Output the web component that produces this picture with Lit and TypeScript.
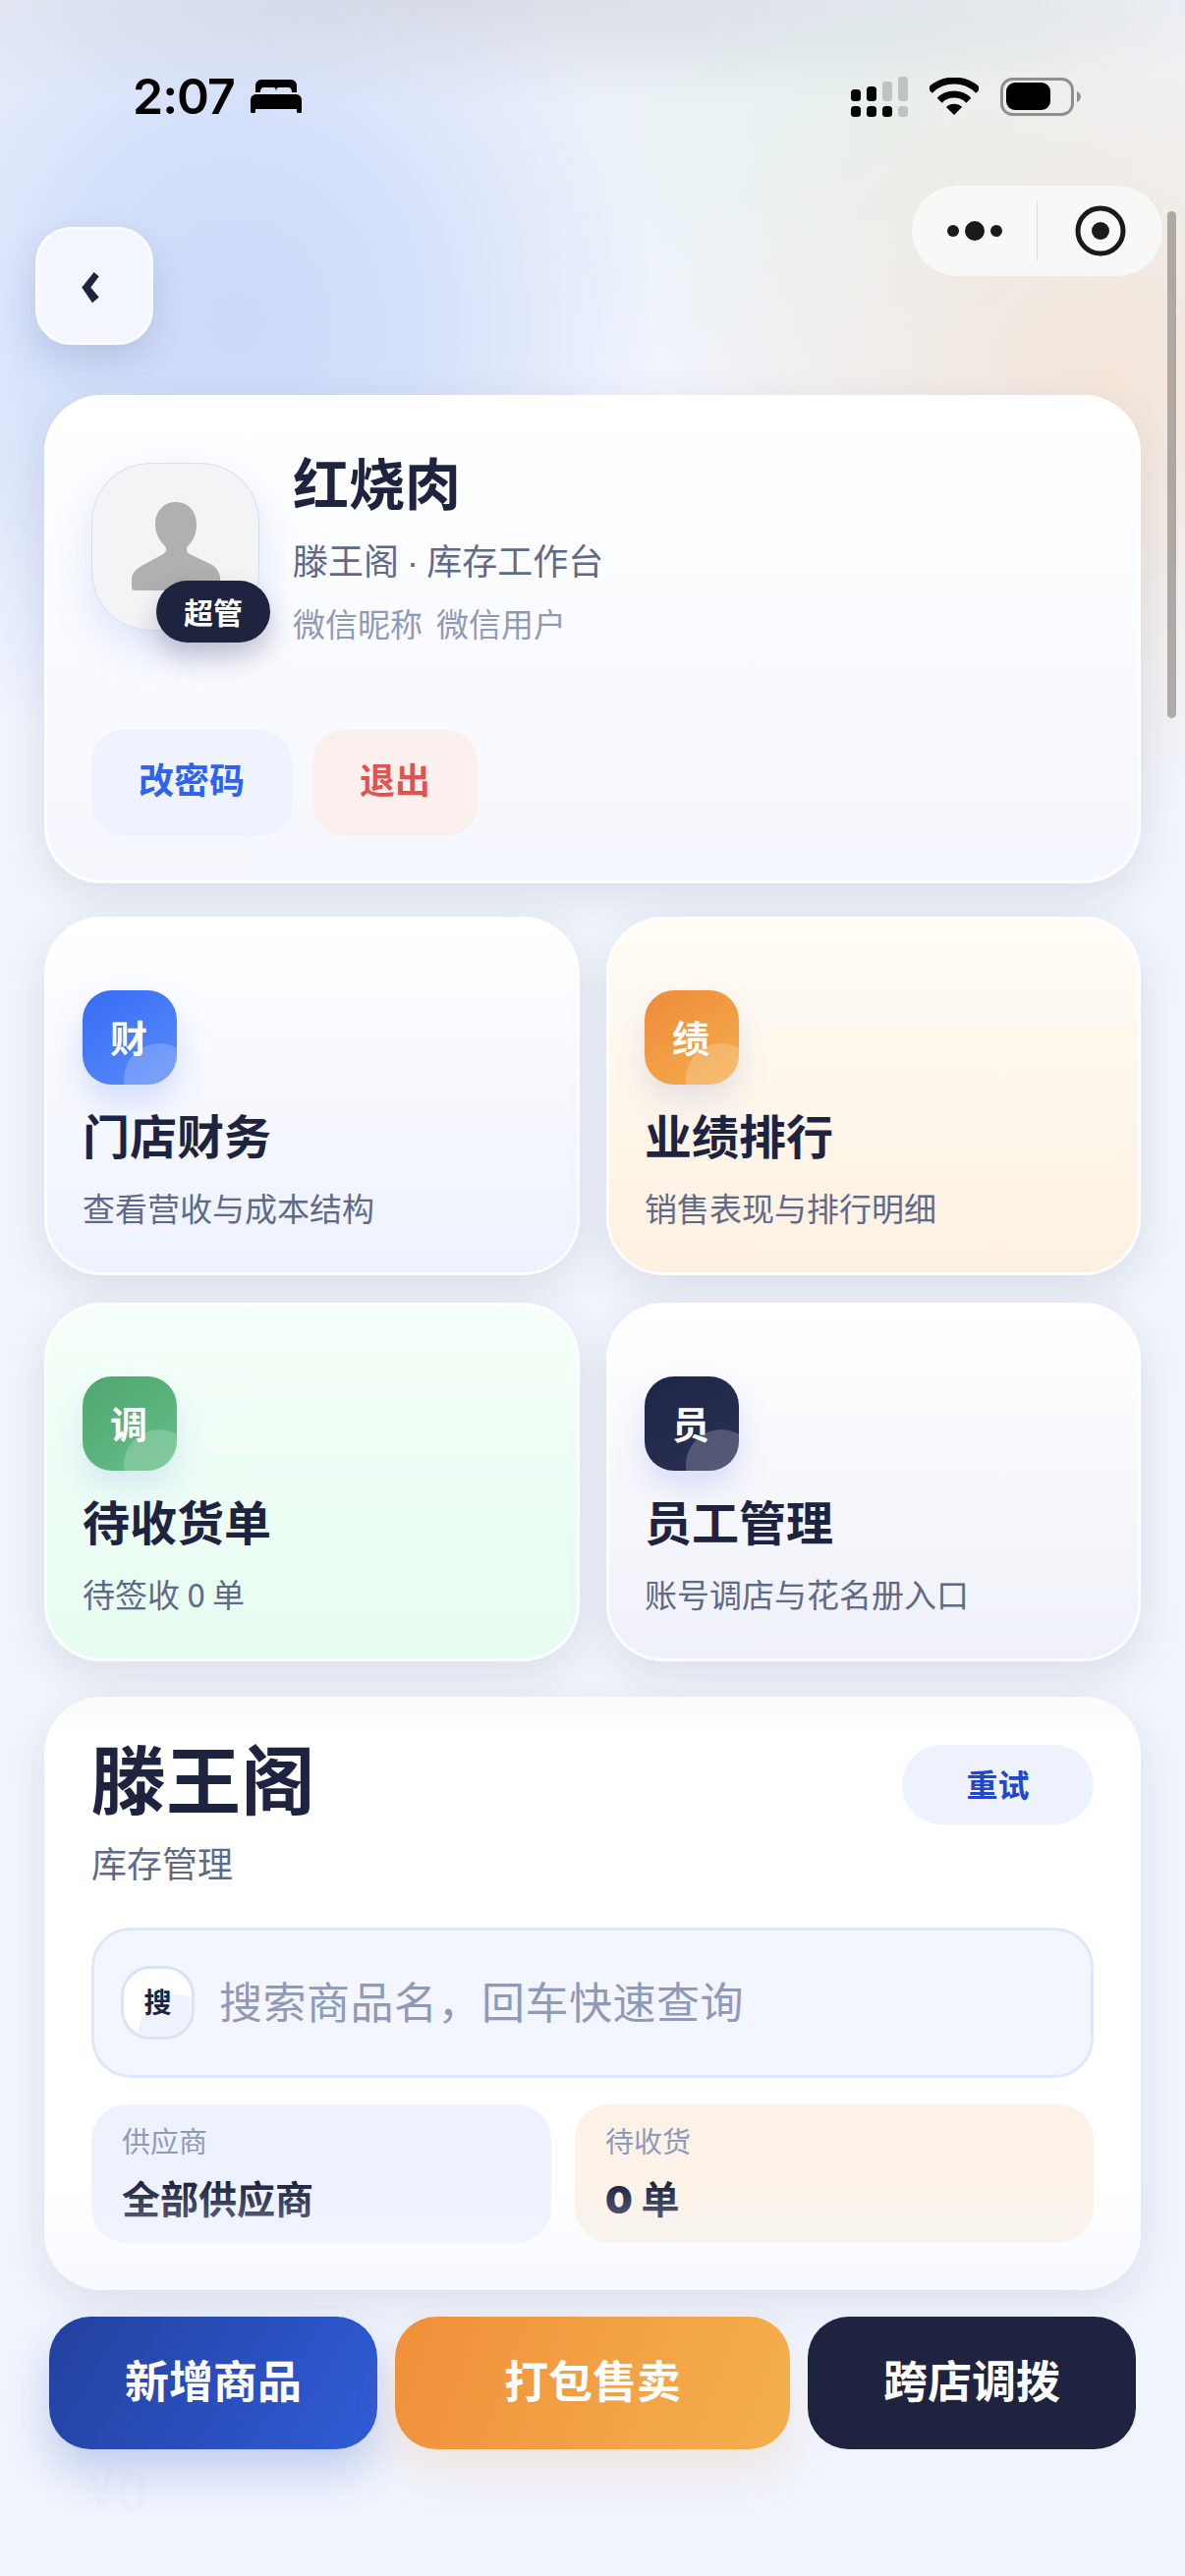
import { LitElement, html, css, svg } from "lit"
import { customElement } from "lit/decorators.js"

const entries = [
    { tone: "blue", mark: "财", title: "门店财务", desc: "查看营收与成本结构" },
    { tone: "orange", mark: "绩", title: "业绩排行", desc: "销售表现与排行明细" },
    { tone: "green", mark: "调", title: "待收货单", desc: "待签收 0 单" },
    { tone: "navy", mark: "员", title: "员工管理", desc: "账号调店与花名册入口" },
]

const signalBars = [
    [0, 13, 12, "#000"], [16, 10, 15, "#000"], [32, 5, 20, "#bcc3c2"], [48, 0, 25, "#bcc3c2"],
    [0, 30, 11, "#000"], [16, 30, 11, "#000"], [32, 30, 11, "#000"], [48, 30, 11, "#bcc3c2"],
] as const

@customElement("app-root")
export class AppRoot extends LitElement {
    static styles = css`
        :host {
            display: block;
            font-family: "Noto Sans CJK SC", "Noto Sans", sans-serif;
            color: #1e2340;
        }
        * { box-sizing: border-box; }

        .page {
            position: relative;
            width: 1206px;
            height: 2622px;
            overflow: hidden;
            display: flex;
            flex-direction: column;
            background:
                radial-gradient(ellipse 900px 110px at 480px 0, rgba(205, 208, 218, 0.65), transparent),
                radial-gradient(ellipse 430px 480px at 240px 330px, #ccdaf9 0%, rgba(204, 218, 249, 0.75) 45%, rgba(204, 218, 249, 0) 100%),
                radial-gradient(ellipse 460px 440px at 1130px 390px, #f4e6da 0%, rgba(244, 230, 218, 0) 100%),
                radial-gradient(ellipse 420px 300px at 900px 130px, #e6f1ee 0%, rgba(230, 241, 238, 0) 100%),
                #f0f4fd;
        }

        .status {
            margin-top: 72px;
            height: 52px;
            padding: 0 106px 0 135px;
            display: flex;
            align-items: center;
            justify-content: space-between;
        }
        .clock { display: flex; align-items: center; gap: 16px; }
        .time {
            font-family: Inter, "Liberation Sans", sans-serif;
            font-size: 50px;
            font-weight: 600;
            letter-spacing: -1px;
            line-height: 52px;
            color: #000;
        }
        .indicators { display: flex; align-items: center; gap: 22px; }
        svg { display: block; }

        .nav {
            margin-top: 64px;
            padding: 0 22px 0 36px;
            display: flex;
            justify-content: space-between;
            align-items: flex-start;
        }
        .back {
            margin-top: 43px;
            width: 120px;
            height: 120px;
            border-radius: 36px;
            border: 3px solid #fbfcff;
            background: #f3f6ff;
            box-shadow: 0 16px 36px rgba(40, 60, 120, 0.16);
            display: flex;
            align-items: center;
            justify-content: center;
        }
        .chevron { margin: 4px 8px 0 0; }
        .capsule {
            width: 257px;
            height: 94px;
            border-radius: 47px;
            background: rgba(249, 249, 247, 0.92);
            border: 1px solid #ecebe8;
            display: flex;
            align-items: center;
        }
        .capsule > div { flex: 1; display: flex; justify-content: center; }
        .capsule .rule { flex: none; width: 1px; height: 60px; background: #dcdcd8; }

        main {
            margin-top: 51px;
            padding: 0 45px;
            display: flex;
            flex-direction: column;
        }

        .profile {
            height: 497px;
            padding: 66px 45px 0;
            border-radius: 58px;
            border: 3px solid rgba(255, 255, 255, 0.9);
            background: linear-gradient(180deg, #ffffff, #f5f7fe) border-box;
            box-shadow: 0 14px 44px rgba(30, 35, 50, 0.1);
        }
        .who { display: flex; gap: 34px; }
        .avatar {
            position: relative;
            flex: none;
            width: 171px;
            height: 171px;
            border-radius: 60px;
            border: 1px solid #d8dcf0;
            background: #f4f4f6;
            box-shadow: 0 16px 44px rgba(80, 120, 240, 0.18);
            display: flex;
            align-items: flex-end;
            justify-content: center;
        }
        .silhouette { margin-bottom: 40px; }
        .badge {
            position: absolute;
            left: 65px;
            top: 119px;
            height: 63px;
            padding: 0 28px;
            border-radius: 32px;
            background: #1e2340;
            color: #fff;
            font-size: 30px;
            font-weight: 700;
            line-height: 62px;
            white-space: nowrap;
            box-shadow: 0 14px 28px rgba(30, 35, 64, 0.24);
        }
        .who-text { margin-top: -10px; }
        .name { font-size: 57px; font-weight: 700; line-height: 57px; }
        .org { margin-top: 33px; font-size: 36px; line-height: 37px; color: #5f6a8a; white-space: nowrap; }
        .org .dot { font-family: "Liberation Sans", sans-serif; }
        .wx { margin-top: 27px; font-size: 33px; line-height: 33px; color: #8f9ab8; display: flex; gap: 14px; }
        .profile-actions { margin-top: 92px; display: flex; gap: 21px; }
        .soft-btn {
            height: 108px;
            padding: 0 48px;
            border-radius: 32px;
            font-size: 36px;
            font-weight: 700;
            line-height: 98px;
        }
        .soft-btn.primary { background: #eff3fe; color: #2f62f1; }
        .soft-btn.danger { background: #fcf0ee; color: #df5450; }

        .grid {
            margin-top: 34px;
            display: grid;
            grid-template-columns: 545px 544px;
            grid-auto-rows: 365px;
            gap: 28px 27px;
        }
        .entry {
            padding: 72px 36px 0;
            border-radius: 58px;
            border: 3px solid rgba(255, 255, 255, 0.85);
            box-shadow: 0 14px 44px rgba(30, 35, 50, 0.1);
        }
        .entry.blue { background: linear-gradient(180deg, #ffffff, #eef2fd) border-box; }
        .entry.orange { background: linear-gradient(180deg, #fffdf7, #fdf0e0) border-box; }
        .entry.green { background: linear-gradient(180deg, #f6fff9, #e6fcf0) border-box; }
        .entry.navy { background: linear-gradient(180deg, #ffffff, #eff1f9) border-box; }
        .mark {
            position: relative;
            overflow: hidden;
            width: 96px;
            height: 96px;
            border-radius: 30px;
            color: #fff;
            font-size: 38px;
            font-weight: 700;
            line-height: 94px;
            text-align: center;
            padding-right: 2px;
        }
        .mark::after {
            content: "";
            position: absolute;
            right: -18px;
            bottom: -30px;
            width: 72px;
            height: 72px;
            border-radius: 50%;
            background: rgba(255, 255, 255, 0.2);
        }
        .blue .mark { background: linear-gradient(145deg, #366cf6, #5a8cf9); box-shadow: 0 16px 32px rgba(60, 110, 240, 0.2); }
        .orange .mark { background: linear-gradient(145deg, #ee8b3c, #f4ae4b); box-shadow: 0 16px 32px rgba(60, 80, 160, 0.13); }
        .green .mark { background: linear-gradient(145deg, #4fa56f, #65c088); box-shadow: 0 16px 32px rgba(70, 130, 230, 0.16); }
        .navy .mark { background: linear-gradient(145deg, #1f2547, #2b3154); box-shadow: 0 16px 32px rgba(70, 100, 230, 0.18); }
        .entry h3 { margin: 26px 0 0; font-size: 48px; font-weight: 700; line-height: 48px; }
        .entry p { margin: 35px 0 0; font-size: 33px; line-height: 33px; color: #5f6a8a; }

        .stock {
            position: relative;
            overflow: hidden;
            margin-top: 36px;
            height: 604px;
            padding: 43px 48px 0;
            border-radius: 58px;
            background: linear-gradient(180deg, #fafafa, #ffffff 36px);
            box-shadow: 0 14px 44px rgba(30, 35, 50, 0.09);
        }
        .stock::after {
            content: "";
            position: absolute;
            left: 0;
            right: 0;
            bottom: 0;
            height: 110px;
            background: linear-gradient(180deg, rgba(244, 247, 255, 0), rgba(244, 247, 255, 0.75));
        }
        .stock-head { display: flex; justify-content: space-between; align-items: flex-start; }
        .stock-head h1 { margin: 0; font-size: 76px; font-weight: 700; line-height: 76px; }
        .stock-head p { margin: 31px 0 0; font-size: 36px; line-height: 36px; color: #5f6a8a; }
        .retry {
            margin-top: 6px;
            width: 195px;
            height: 81px;
            border-radius: 41px;
            background: #eef2fd;
            color: #2347c9;
            font-size: 32px;
            font-weight: 700;
            line-height: 78px;
            text-align: center;
        }
        .search {
            margin-top: 49px;
            height: 153px;
            padding-left: 27px;
            border: 3px solid #dfe7fb;
            border-radius: 40px;
            background: #f3f6ff;
            display: flex;
            align-items: center;
            gap: 25px;
        }
        .search-mark {
            position: relative;
            overflow: hidden;
            flex: none;
            width: 75px;
            height: 75px;
            border: 3px solid #dbe2f3;
            border-radius: 30px;
            background: #fff;
            font-size: 28px;
            font-weight: 700;
            line-height: 66px;
            text-align: center;
        }
        .search-mark::before {
            content: "";
            position: absolute;
            left: 15px;
            top: 26px;
            width: 80px;
            height: 80px;
            border-radius: 50%;
            background: #eef2fd;
        }
        .search-mark span { position: relative; }
        .placeholder { margin-bottom: 5px; font-size: 44px; letter-spacing: 0.5px; line-height: 44px; color: #8f9ab8; }
        .tiles { margin-top: 27px; display: flex; gap: 24px; }
        .tile { height: 141px; padding: 22px 31px 0; border-radius: 36px; }
        .tile.supplier { width: 468px; background: #eef2fd; }
        .tile.pending { flex: 1; background: #fcf2e7; }
        .tile label { display: block; font-size: 29px; line-height: 29px; color: #8f9ab8; }
        .tile strong { display: block; margin-top: 24px; font-size: 39px; font-weight: 700; line-height: 39px; color: #1e2340; }
        .tile .zero { font-family: Inter, "Noto Sans", sans-serif; font-weight: 900; }

        .actions {
            position: relative;
            margin: 27px 5px 0;
            display: flex;
            gap: 18px;
        }
        .action {
            height: 135px;
            border-radius: 42px;
            color: #fff;
            font-size: 45px;
            font-weight: 700;
            line-height: 127px;
            text-align: center;
        }
        .action.add { width: 334px; background: linear-gradient(120deg, #23409f, #2f5cd6); box-shadow: 0 24px 44px rgba(36, 71, 184, 0.22); }
        .action.pack { width: 402px; background: linear-gradient(110deg, #f0903b, #f4b04d); box-shadow: 0 24px 44px rgba(240, 145, 60, 0.14); }
        .action.move { width: 334px; background: #1e2340; }

        /* list rows still scrolling underneath the action bar */
        .ghost {
            position: absolute;
            left: 87px;
            top: 2505px;
            display: flex;
            align-items: flex-end;
            gap: 38px;
            color: rgba(30, 35, 64, 0.016);
        }
        .ghost b { font-size: 54px; font-weight: 700; line-height: 54px; }
        .ghost span { font-size: 28px; line-height: 44px; }

        .scrollbar {
            position: absolute;
            left: 1188px;
            top: 215px;
            width: 9px;
            height: 516px;
            border-radius: 5px;
            background: rgba(120, 114, 110, 0.55);
        }
    `

    private renderStatusIcons() {
        return html`
            <svg width="58" height="41" viewBox="0 0 58 41">
                ${signalBars.map(([x, y, h, fill]) => svg`<rect x=${x} y=${y} width="10" height=${h} rx="3.5" fill=${fill}></rect>`)}
            </svg>
            <svg width="50" height="38" viewBox="0 0 50 38">
                <g fill="none" stroke="#000" stroke-width="7">
                    <path d="M.3 13.3a35 35 0 0 1 49.4 0"></path>
                    <path d="M10.2 23.2a21 21 0 0 1 29.6 0"></path>
                </g>
                <path d="M25 38l-8-8a11.3 11.3 0 0 1 16 0z"></path>
            </svg>
            <svg width="82" height="39" viewBox="0 0 82 39">
                <rect x="1.5" y="1.5" width="72" height="36" rx="11" fill="none" stroke="#8f8f8f" stroke-width="3"></rect>
                <rect x="6" y="5" width="45" height="28" rx="9"></rect>
                <path d="M78 14c2 .5 4 3 4 5.500s-2 5-4 5.500z" fill="#8f8f8f"></path>
            </svg>
        `
    }

    render() {
        return html`
            <div class="page">
                <div class="ghost"><b>¥0</b><span>进价 ¥0</span></div>

                <header class="status">
                    <div class="clock">
                        <span class="time">2:07</span>
                        <svg width="52" height="34" viewBox="0 0 52 34">
                            <path d="M5 13V6a6 6 0 0 1 6-6h30a6 6 0 0 1 6 6v7h-5c0-3-1-5-4-5H29c-2 0-3 1-3 5 0-4-1-5-3-5H14c-3 0-4 2-4 5z"></path>
                            <path d="M6 15h40c3 0 6 2 6 6v11a2.500 2.500 0 0 1-5 0v-2H5v2a2.500 2.500 0 0 1-5 0V21c0-4 3-6 6-6z"></path>
                        </svg>
                    </div>
                    <div class="indicators">${this.renderStatusIcons()}</div>
                </header>

                <nav class="nav">
                    <div class="back">
                        <svg class="chevron" width="18" height="32" viewBox="0 0 18 32">
                            <path d="M12.700 0L17.700 4.600L9.300 15.600L17.700 25.600L11 31.300L.3 15.600z" fill="#1e2340"></path>
                        </svg>
                    </div>
                    <div class="capsule">
                        <div>
                            <svg width="56" height="22" viewBox="0 0 56 22" fill="#1a1a1a">
                                <circle cx="6" cy="11" r="6"></circle>
                                <circle cx="28" cy="11" r="10"></circle>
                                <circle cx="50" cy="11" r="6"></circle>
                            </svg>
                        </div>
                        <span class="rule"></span>
                        <div>
                            <svg width="52" height="52" viewBox="0 0 52 52">
                                <circle cx="26" cy="26" r="23" fill="none" stroke="#1a1a1a" stroke-width="5"></circle>
                                <circle cx="26" cy="26" r="9" fill="#1a1a1a"></circle>
                            </svg>
                        </div>
                    </div>
                </nav>

                <main>
                    <section class="profile">
                        <div class="who">
                            <div class="avatar">
                                <svg class="silhouette" width="90" height="90" viewBox="0 0 90 90">
                                    <path d="M45 0c13 0 21 10 21 23 0 10-4 17-9 22-2 3-1 6 2 8l21 10c6 3 9 8 10 13v10c0 3-1 4-4 4H4c-3 0-4-1-4-4V77c1-5 5-9 10-12l22-12c3-2 4-5 2-8-5-5-10-12-10-22C24 10 32 0 45 0z" fill="#b0b0b0"></path>
                                </svg>
                                <span class="badge">超管</span>
                            </div>
                            <div class="who-text">
                                <div class="name">红烧肉</div>
                                <div class="org">滕王阁 <span class="dot">·</span> 库存工作台</div>
                                <div class="wx"><span>微信昵称</span><span>微信用户</span></div>
                            </div>
                        </div>
                        <div class="profile-actions">
                            <div class="soft-btn primary">改密码</div>
                            <div class="soft-btn danger">退出</div>
                        </div>
                    </section>

                    <section class="grid">
                        ${entries.map(e => html`
                            <div class="entry ${e.tone}">
                                <div class="mark">${e.mark}</div>
                                <h3>${e.title}</h3>
                                <p>${e.desc}</p>
                            </div>
                        `)}
                    </section>

                    <section class="stock">
                        <div class="stock-head">
                            <div>
                                <h1>滕王阁</h1>
                                <p>库存管理</p>
                            </div>
                            <div class="retry">重试</div>
                        </div>
                        <div class="search">
                            <div class="search-mark"><span>搜</span></div>
                            <span class="placeholder">搜索商品名，回车快速查询</span>
                        </div>
                        <div class="tiles">
                            <div class="tile supplier">
                                <label>供应商</label>
                                <strong>全部供应商</strong>
                            </div>
                            <div class="tile pending">
                                <label>待收货</label>
                                <strong><span class="zero">0</span> 单</strong>
                            </div>
                        </div>
                    </section>

                    <div class="actions">
                        <div class="action add">新增商品</div>
                        <div class="action pack">打包售卖</div>
                        <div class="action move">跨店调拨</div>
                    </div>
                </main>

                <div class="scrollbar"></div>
            </div>
        `
    }
}
